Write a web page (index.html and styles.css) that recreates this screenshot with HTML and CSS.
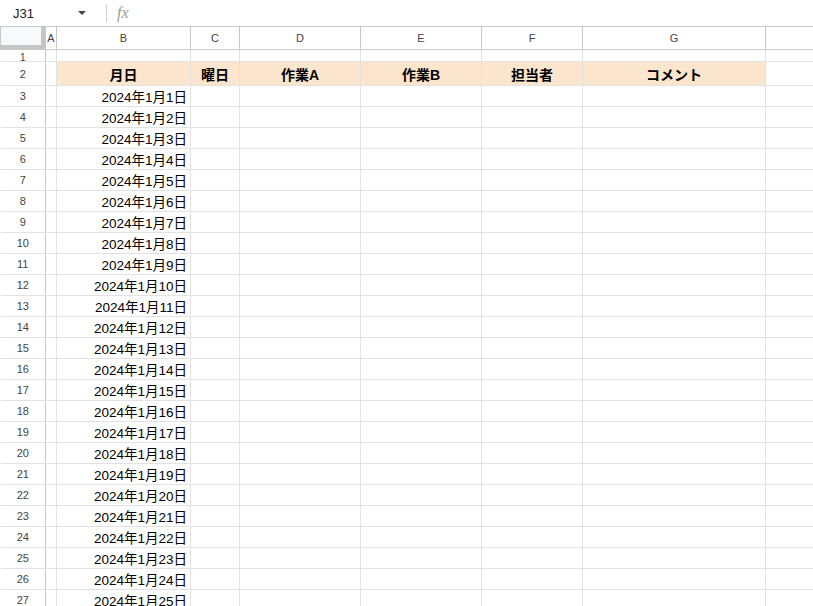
FILE: index.html
```html
<!DOCTYPE html>
<html lang="ja">
<head>
  <meta charset="UTF-8" />
  <meta name="viewport" content="width=device-width, initial-scale=1.0" />
  <title>スプレッドシート</title>
  <link rel="stylesheet" href="styles.css">
</head>
<body>

<!-- name box + formula bar -->
<div class="formula-bar">
  <div class="name-box">
    <span class="cell-ref">J31</span>
    <span class="caret"></span>
  </div>
  <div class="bar-sep"></div>
  <span class="fx">fx</span>
</div>

<table class="sheet" id="sheet">
  <colgroup>
    <col class="c-row"><col class="c-a"><col class="c-b"><col class="c-c"><col class="c-d">
    <col class="c-e"><col class="c-f"><col class="c-g"><col class="c-h">
  </colgroup>
  <thead>
    <tr class="col-head">
      <th class="corner"></th>
      <th>A</th><th>B</th><th>C</th><th>D</th><th>E</th><th>F</th><th>G</th><th></th>
    </tr>
  </thead>
  <tbody id="rows">
    <tr class="r-short">
      <td class="row-num">1</td>
      <td></td><td></td><td></td><td></td><td></td><td></td><td></td><td></td>
    </tr>
    <tr class="r-title">
      <td class="row-num">2</td>
      <td></td>
      <td class="hd">月日</td>
      <td class="hd">曜日</td>
      <td class="hd">作業A</td>
      <td class="hd">作業B</td>
      <td class="hd">担当者</td>
      <td class="hd">コメント</td>
      <td></td>
    </tr>
    <!-- date rows generated below -->
  </tbody>
</table>

<script>
  const tbody = document.getElementById("rows");
  for (let i = 3; i <= 27; i++) {
    const tr = document.createElement("tr");
    tr.className = "r-data";
    let html = '<td class="row-num">' + i + '</td><td></td>';
    html += '<td class="date">2024年1月' + (i - 2) + '日</td>';
    for (let c = 0; c < 6; c++) html += '<td></td>';
    tr.innerHTML = html;
    tbody.appendChild(tr);
  }
</script>

</body>
</html>
```

FILE: styles.css
```css
body {
  margin: 0;
  background: #fff;
  font-family: "Liberation Sans", "Noto Sans CJK JP", sans-serif;
  color: #000;
  overflow: hidden;
}

/* formula bar */
.formula-bar {
  height: 27px;
  display: flex;
  align-items: center;
  border-bottom: 1px solid #c7c7c7;
  box-sizing: border-box;
}

.name-box {
  width: 95px;
  display: flex;
  align-items: center;
  justify-content: space-between;
  padding: 0 9px 0 13px;
  box-sizing: border-box;
}

.cell-ref {
  font-size: 13px;
  color: #202124;
}

.caret {
  width: 0;
  height: 0;
  border-left: 4px solid transparent;
  border-right: 4px solid transparent;
  border-top: 4px solid #444;
}

.bar-sep {
  width: 1px;
  height: 18px;
  background: #d0d0d0;
  margin: 0 10px 0 11px;
}

.fx {
  font-family: "Liberation Serif", serif;
  font-style: italic;
  font-size: 16px;
  color: #9a9a9a;
}

/* grid */
.sheet {
  border-collapse: collapse;
  table-layout: fixed;
  width: 900px;
}

.c-row { width: 45px; }
.c-a { width: 11px; }
.c-b { width: 134px; }
.c-c { width: 49px; }
.c-d { width: 121px; }
.c-e { width: 121px; }
.c-f { width: 101px; }
.c-g { width: 183px; }
.c-h { width: 135px; }

.sheet td,
.sheet th {
  border: 1px solid #e2e2e2;
  padding: 0 3px;
  overflow: hidden;
  white-space: nowrap;
}

.col-head th {
  height: 22px;
  font-weight: normal;
  font-size: 11px;
  color: #444;
  border-color: #c7c7c7;
  border-top: none;
  padding: 0;
}

.col-head th.corner {
  background: #f8f9fa;
  box-shadow: inset -4px -4px 0 #c4c7c5;
}

.row-num {
  text-align: center;
  font-size: 11px;
  color: #444;
  border-left: none !important;
  border-right-color: #c7c7c7 !important;
  padding: 0 !important;
}

.r-short td { height: 11px; font-size: 10px; line-height: 6px; vertical-align: bottom; overflow: visible; }
.r-title td { height: 23px; }
.r-data td { height: 20px; }

.hd {
  background: #fce5cd;
  text-align: center;
  font-weight: bold;
  font-size: 14px;
}

.date {
  text-align: right;
  font-size: 13.5px;
}
```
